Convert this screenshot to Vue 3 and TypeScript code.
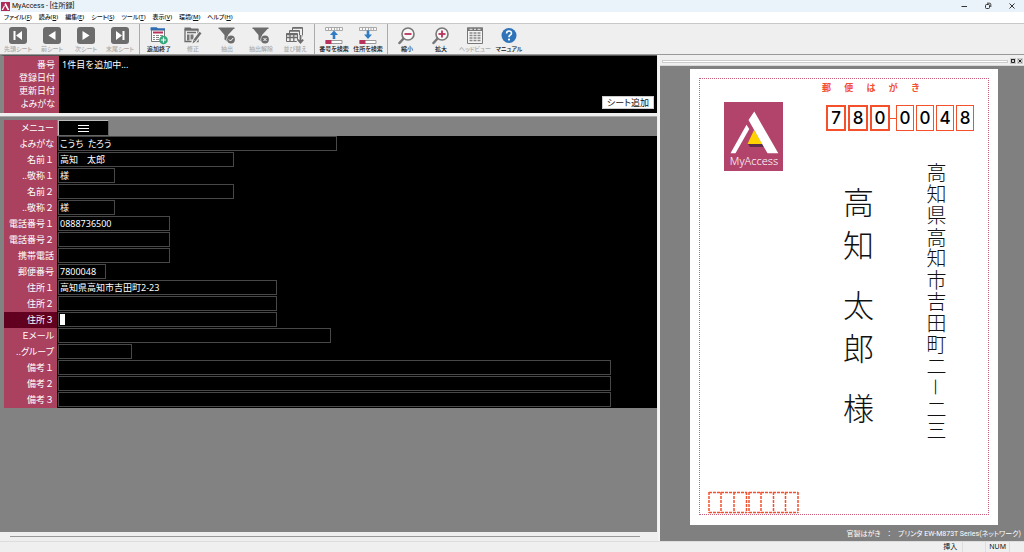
<script setup lang="ts">
import { ref } from 'vue'

interface MenuItem { text: string; key: string }
interface Tool { label: string; icon: string; enabled?: boolean }
interface Field { id: string; label: string; size: string; value: string; kana?: boolean; active?: boolean }

const menus: MenuItem[] = [
  { text: 'ファイル', key: 'F' },
  { text: '読み', key: 'R' },
  { text: '編集', key: 'E' },
  { text: 'シート', key: 'S' },
  { text: 'ツール', key: 'T' },
  { text: '表示', key: 'V' },
  { text: '環境', key: 'M' },
  { text: 'ヘルプ', key: 'H' },
]

const toolGroups: Tool[][] = [
  [
    { label: '先頭シート', icon: 'first' },
    { label: '前シート', icon: 'prev' },
    { label: '次シート', icon: 'next' },
    { label: '末尾シート', icon: 'last' },
  ],
  [
    { label: '追加終了', icon: 'add', enabled: true },
    { label: '修正', icon: 'edit' },
    { label: '抽出', icon: 'filter' },
    { label: '抽出解除', icon: 'unfilter' },
    { label: '並び替え', icon: 'sort' },
  ],
  [
    { label: '番号を検索', icon: 'findup', enabled: true },
    { label: '住所を検索', icon: 'finddown', enabled: true },
  ],
  [
    { label: '縮小', icon: 'zoomout', enabled: true },
    { label: '拡大', icon: 'zoomin', enabled: true },
    { label: 'ヘッドビュー', icon: 'head' },
    { label: 'マニュアル', icon: 'help', enabled: true },
  ],
]

const fields = ref<Field[]>([
  { id: 'yomi', label: 'よみがな', size: 'w-yomi', value: 'こうち  たろう', kana: true },
  { id: 'name1', label: '名前１', size: 'w-name', value: '高知　太郎' },
  { id: 'title1', label: '..敬称１', size: 'w-title', value: '様' },
  { id: 'name2', label: '名前２', size: 'w-name', value: '' },
  { id: 'title2', label: '..敬称２', size: 'w-title', value: '様' },
  { id: 'tel1', label: '電話番号１', size: 'w-tel', value: '0888736500' },
  { id: 'tel2', label: '電話番号２', size: 'w-tel', value: '' },
  { id: 'mobile', label: '携帯電話', size: 'w-tel', value: '' },
  { id: 'zip', label: '郵便番号', size: 'w-zip', value: '7800048' },
  { id: 'addr1', label: '住所１', size: 'w-addr', value: '高知県高知市吉田町2-23' },
  { id: 'addr2', label: '住所２', size: 'w-addr', value: '' },
  { id: 'addr3', label: '住所３', size: 'w-addr', value: '', active: true },
  { id: 'mail', label: 'Ｅメール', size: 'w-mail', value: '', kana: true },
  { id: 'group', label: '..グループ', size: 'w-group', value: '', kana: true },
  { id: 'note1', label: '備考１', size: 'w-note', value: '' },
  { id: 'note2', label: '備考２', size: 'w-note', value: '' },
  { id: 'note3', label: '備考３', size: 'w-note', value: '' },
])

const cardTitle = Array.from('郵便はがき')
const cardAddress = Array.from('高知県高知市吉田町二－二三')
</script>

<template>
  <div class="window">
    <header class="titlebar">
      <svg class="appicon" viewBox="0 0 59 59" aria-hidden="true">
        <rect width="59" height="59" fill="#b02a55" />
        <path d="M30 5 L23 16 L43 53 H55Z M21 21 L25 28 L14 53 H4Z" fill="#fff" />
      </svg>
      <h1>MyAccess - [住所録]</h1>
      <div class="winbtns">
        <button type="button" aria-label="最小化">
          <svg viewBox="0 0 8 8"><path d="M1.5 4.5H7" /></svg>
        </button>
        <button type="button" aria-label="元に戻す">
          <svg viewBox="0 0 8 8"><rect x="1.5" y="2.5" width="4" height="4" rx="1" /><path d="M3 1.2H5.6Q6.8 1.2 6.8 2.4V5" /></svg>
        </button>
        <button type="button" aria-label="閉じる">
          <svg viewBox="0 0 8 8"><path d="M1.5 1.5L6.5 6.5M6.5 1.5L1.5 6.5" /></svg>
        </button>
      </div>
    </header>

    <nav class="menubar">
      <button v-for="m in menus" :key="m.key" type="button">{{ m.text }}(<u>{{ m.key }}</u>)</button>
    </nav>

    <div class="toolbar">
      <div v-for="(group, g) in toolGroups" :key="g" class="toolgroup">
        <button v-for="t in group" :key="t.label" type="button" class="tool" :class="{ off: !t.enabled }">
          <svg v-if="['first', 'prev', 'next', 'last'].includes(t.icon)" viewBox="0 0 20 19">
            <rect x="1" y="1" width="18" height="17" rx="3" fill="#6c6c6c" />
            <path v-if="t.icon === 'first'" d="M5.500 5h2v9h-2z M14 5v9l-6-4.500z" fill="#fff" />
            <path v-if="t.icon === 'prev'" d="M13.500 5v9l-7-4.500z" fill="#fff" />
            <path v-if="t.icon === 'next'" d="M6.500 5v9l7-4.500z" fill="#fff" />
            <path v-if="t.icon === 'last'" d="M12.500 5h2v9h-2z M6 5v9l6-4.500z" fill="#fff" />
          </svg>
          <svg v-else-if="t.icon === 'add'" viewBox="0 0 20 19">
            <path d="M2 4V1.500h6l1 1h7V4z" fill="#2f6cb3" />
            <path d="M2.500 4h13v11.500h-13z" fill="#fff" stroke="#777" />
            <path d="M1.500 1.500h6l1 1h7.500v1.800h-14.500z" fill="#2f6cb3" />
            <path d="M4 6.500h10" stroke="#b8315a" stroke-width="2" />
            <path d="M4 9.500h2m1 0h3m1 0h3M4 11.500h2m1 0h3M4 13.500h2m1 0h3" stroke="#888" stroke-width="1.200" />
            <circle cx="14.500" cy="14" r="4.300" fill="#35a87b" />
            <path d="M14.500 11.500v5M12 14h5" stroke="#fff" stroke-width="1.200" />
          </svg>
          <svg v-else-if="t.icon === 'edit'" viewBox="0 0 20 19">
            <path d="M1.500 4V1.500h6l1 1h7V4z" fill="#6c6c6c" />
            <path d="M2 4h13v11.500H2z" fill="#eee" stroke="#6c6c6c" stroke-width="1.300" />
            <path d="M4 6.500h9" stroke="#6c6c6c" stroke-width="1.500" />
            <path d="M4 8.500h2.500v6H4zM7.500 8.500h3v5h-3z" fill="#777" />
            <path d="M18 6.500L11 15.500L10 18" stroke="#efefef" stroke-width="4.500" fill="none" />
            <path d="M17.500 6.500L11.500 14.500" stroke="#6c6c6c" stroke-width="2.500" />
            <path d="M10.500 14l2 1.500l-3 2z" fill="#6c6c6c" />
          </svg>
          <svg v-else-if="t.icon === 'filter' || t.icon === 'unfilter'" viewBox="0 0 20 19">
            <path d="M2 2.500h15L11 9v7l-3.500-2.500V9z" fill="#6c6c6c" />
            <path d="M1.500 1.500h16v1.500h-16z" fill="#6c6c6c" />
            <circle cx="14" cy="13.500" r="4.600" fill="#efefef" />
            <circle cx="14" cy="13.500" r="3.900" fill="#6c6c6c" />
            <path v-if="t.icon === 'filter'" d="M12 13.500l1.500 1.500l2.700-3" stroke="#fff" fill="none" />
            <path v-else d="M12.500 12l3 3m0-3l-3 3" stroke="#fff" />
          </svg>
          <svg v-else-if="t.icon === 'sort'" viewBox="0 0 20 19">
            <path d="M7.500 4.500v-3h10v9" fill="none" stroke="#6c6c6c" />
            <path d="M4.500 7V4.500h10v7" fill="none" stroke="#6c6c6c" />
            <path d="M1.500 7.500h11v8h-11z" fill="#eee" stroke="#6c6c6c" />
            <path d="M1.500 8.500h11M8 2h9M5 5h9M1.500 11.500h11M5 8v7.500M8.800 8v7.500" stroke="#6c6c6c" stroke-width="1.300" />
            <path d="M15.500 9v7M12.800 13.700l2.700 3l2.700-3" fill="none" stroke="#efefef" stroke-width="4" />
            <path d="M15.500 9v7M12.800 13.700l2.700 3l2.700-3" fill="none" stroke="#6c6c6c" stroke-width="1.800" />
          </svg>
          <svg v-else-if="t.icon === 'findup' || t.icon === 'finddown'" viewBox="0 0 20 19">
            <path d="M1.500 1.500h17v3h-17zM4.500 1.500v3M7.500 1.500v3M10.500 1.500v3M13 1.500v3M15.500 1.500v3" fill="#f8f8f8" stroke="#aaa" />
            <path d="M2 14.500h16v3H2z" fill="#fff" stroke="#999" />
            <path d="M1.500 14h6v4h-6z" fill="#b8315a" />
            <path v-if="t.icon === 'findup'" d="M10 4.500l4 4.500h-2.700v4h-2.600V9H6z" fill="#2f7bc4" />
            <path v-else d="M8.700 4.500h2.600v4H14l-4 4.500l-4-4.500h2.700z" fill="#2f7bc4" />
          </svg>
          <svg v-else-if="t.icon === 'zoomout' || t.icon === 'zoomin'" viewBox="0 0 20 19">
            <path d="M7 12L2.500 17" stroke="#777" stroke-width="2.500" stroke-linecap="round" />
            <circle cx="11" cy="8" r="6" fill="#f8f8f8" stroke="#777" stroke-width="1.600" />
            <path d="M7.500 8h7" stroke="#b8315a" stroke-width="1.800" />
            <path v-if="t.icon === 'zoomin'" d="M11 4.500v7" stroke="#b8315a" stroke-width="1.800" />
          </svg>
          <svg v-else-if="t.icon === 'head'" viewBox="0 0 20 19">
            <path d="M2.500 2h15v15.500h-15z" fill="#f4f4f4" stroke="#777" />
            <path d="M2 1.500h16v3.500H2z" fill="#777" />
            <path d="M4.500 3.300h3m1.500 0h2m1.500 0h3" stroke="#eee" />
            <path d="M4.500 7h3m1 0h3m1 0h3M4.500 9.500h3m1 0h3m1 0h3M4.500 12h3m1 0h3m1 0h3M4.500 14.500h3m1 0h3m1 0h3" stroke="#888" stroke-width="1.500" />
          </svg>
          <svg v-else viewBox="0 0 20 19">
            <circle cx="10" cy="9.500" r="7.500" fill="#2f74b8" />
            <path d="M7.600 7.500Q7.600 5 10 5T12.500 7.200Q12.500 8.500 11 9.300Q10 9.900 10 11.300" fill="none" stroke="#fff" stroke-width="1.600" />
            <circle cx="10" cy="13.600" r="1.100" fill="#fff" />
          </svg>
          <span>{{ t.label }}</span>
        </button>
      </div>
    </div>

    <main class="work">
      <section class="left">
        <div class="summary">
          <dl>
            <dt>番号</dt><dd>1件目を追加中...</dd>
            <dt>登録日付</dt><dd></dd>
            <dt>更新日付</dt><dd></dd>
            <dt class="kana">よみがな</dt><dd></dd>
          </dl>
          <button type="button" class="addsheet kana">シート追加</button>
        </div>

        <div class="sheet">
          <div class="row menurow">
            <span class="label kana">メニュー</span>
            <button type="button" class="burger" aria-label="メニュー"><i></i><i></i><i></i></button>
          </div>
          <div v-for="f in fields" :key="f.id" class="row" :class="{ active: f.active }">
            <label class="label" :class="{ kana: f.kana }" :for="f.id">{{ f.label }}</label>
            <div class="cell">
              <input :id="f.id" v-model="f.value" type="text" :class="[f.size, { kana: f.kana }]" />
              <span v-if="f.active" class="caret"></span>
            </div>
          </div>
        </div>
        <div class="hscroll"><span></span></div>
      </section>

      <section class="preview">
        <div class="dock">
          <span class="grip"></span>
          <button type="button" aria-label="フロート"><svg viewBox="0 0 6 6"><path d="M1.500 1.500h3v3h-3zM1 1.500h4" /></svg></button>
          <button type="button" aria-label="閉じる"><svg viewBox="0 0 6 6"><path d="M1.500 1.500l3 3m0-3l-3 3" /></svg></button>
        </div>
        <div class="stage">
          <article class="card">
            <div class="margin"></div>
            <div class="cardtitle"><span v-for="c in cardTitle" :key="c">{{ c }}</span></div>
            <svg class="logo" viewBox="0 0 59 69" role="img" aria-label="MyAccess">
              <rect width="59" height="69" fill="#b2446c" />
              <path d="M24 42H40V45H26Z" fill="#5b2c4c" />
              <path d="M30 28L38.500 42H23.500Z" fill="#ffd200" />
              <path d="M30.300 9.500L24.500 18L43.500 51.300H54.300ZM22.500 22.700L25.300 27L11.500 51.300H6.500Z" fill="#fff" />
              <text x="30" y="63" text-anchor="middle" class="logotext">MyAccess</text>
            </svg>
            <div class="zip">
              <b>7</b><b>8</b><b>0</b><i></i><span>0</span><span>0</span><span>4</span><span>8</span>
            </div>
            <div class="person"><span>高知</span><span>太郎</span><span>様</span></div>
            <div class="address"><span v-for="(c, i) in cardAddress" :key="i">{{ c }}</span></div>
            <svg class="sender" viewBox="0 0 91 23" aria-hidden="true">
              <path d="M1 1.500H39M1 21.500H39M41 1.500H90M41 21.500H90" />
              <path d="M1 1V22M38.500 1V22M41 1V22M90 1V22" />
              <path d="M13 1V22M26 1V22M53 1V22M65.500 1V22M77.500 1V22" />
            </svg>
          </article>
        </div>
        <p class="printer kana">官製はがき　：　プリンタ EW-M873T Series(ネットワーク)</p>
      </section>
    </main>

    <footer class="status"><span>挿入</span><span></span><span>NUM</span></footer>
  </div>
</template>

<style>
body {
  margin: 0;
}
</style>

<style scoped>
.window {
  display: flex;
  flex-direction: column;
  height: 100vh;
  overflow: hidden;
  background: #efefef;
  color: #111;
  font-family: "Noto Sans", "Noto Sans CJK JP", sans-serif;
  font-size: 9px;
}
.window *,
.window {
  box-sizing: border-box;
}
button {
  margin: 0;
  padding: 0;
  border: 0;
  background: none;
  color: inherit;
  font: inherit;
}
.kana {
  font-feature-settings: "palt";
}
.titlebar {
  display: flex;
  align-items: center;
  flex: none;
  height: 12px;
  padding-left: 1px;
  background: #eaf3fa;
}
.appicon {
  width: 9px;
  height: 9px;
}
h1 {
  flex: 1;
  margin: 0 0 0 2px;
  font-family: Roboto, "Noto Sans CJK JP", sans-serif;
  font-size: 7px;
  font-weight: 400;
  line-height: 12px;
}
.winbtns {
  display: flex;
}
.winbtns button {
  display: grid;
  place-items: center;
  width: 24px;
  height: 12px;
}
.winbtns svg {
  width: 8px;
  height: 8px;
  fill: none;
  stroke: #333;
}
.menubar {
  display: flex;
  flex: none;
  gap: 7px;
  height: 12px;
  padding-left: 4px;
  border-bottom: 1px solid #c8c8c8;
  background: #fff;
  font-size: 6px;
  font-weight: 500;
  line-height: 11px;
  font-feature-settings: "palt";
}
.toolbar {
  display: flex;
  flex: none;
  height: 31px;
  padding-left: 1px;
  border-bottom: 1px solid #999;
}
.toolgroup {
  display: flex;
}
.toolgroup + .toolgroup {
  margin-left: 2px;
  padding-left: 2px;
  border-left: 1px solid #aaa;
}
.tool {
  display: flex;
  flex-direction: column;
  align-items: center;
  width: 34px;
  padding-top: 2px;
  font-size: 6px;
  font-weight: 500;
  line-height: 9px;
  white-space: nowrap;
  font-feature-settings: "palt";
}
.tool svg {
  flex: none;
  width: 20px;
  height: 19px;
  fill: none;
}
.off {
  color: #aaa;
}
.work {
  display: flex;
  flex: 1;
  min-height: 0;
}
.left {
  display: flex;
  flex: 1;
  flex-direction: column;
  min-width: 0;
}
.summary {
  display: flex;
  align-items: flex-end;
  justify-content: space-between;
  flex: none;
  height: 58px;
  margin-right: 1px;
  padding-right: 3px;
  border-top: 1px solid #555;
  border-left: 4px solid #858585;
  background: linear-gradient(to right, #a9415f 55px, #000 55px);
}
dl {
  display: grid;
  grid-template-columns: 55px auto;
  grid-auto-rows: 13px;
  align-self: flex-start;
  margin: 2px 0 0;
  color: #fff;
  line-height: 13px;
}
dt {
  padding-right: 4px;
  text-align: right;
}
dd {
  margin: 0 0 0 3px;
}
.addsheet {
  width: 52px;
  height: 13px;
  margin-bottom: 4px;
  border: 1px solid #ccc;
  background: #fff;
  color: #111;
  line-height: 11px;
}
.sheet {
  flex: 1;
  min-height: 0;
  margin: 3px 1px 0 0;
  padding: 3px 0 0 4px;
  border-top: 1px solid #aaa;
  background: #828282;
}
.row {
  display: flex;
  height: 16px;
  background: #000;
}
.menurow {
  background: none;
}
.label {
  flex: none;
  width: 53px;
  padding-right: 3px;
  background: #a9415f;
  color: #fff;
  line-height: 16px;
  text-align: right;
  white-space: nowrap;
}
.active .label {
  background: #62001f;
}
.burger {
  display: flex;
  flex-direction: column;
  align-items: center;
  justify-content: center;
  gap: 2px;
  width: 51px;
  height: 16px;
  margin-left: 1px;
  border: 1px solid #666;
  border-top-color: #bbb;
  border-left-color: #bbb;
  background: #000;
}
.burger i {
  width: 11px;
  height: 1px;
  background: #fff;
}
.cell {
  position: relative;
  flex: 1;
  min-width: 0;
  padding-left: 1px;
}
input {
  display: block;
  max-width: 100%;
  height: 15px;
  padding: 0 1px;
  border: 1px solid #484848;
  border-radius: 0;
  outline: 0;
  background: #000;
  color: #fff;
  font-family: inherit;
  font-size: 9px;
}
.w-yomi { width: 279px; }
.w-name { width: 176px; }
.w-title { width: 57px; }
.w-tel { width: 112px; }
.w-zip { width: 48px; }
.w-addr { width: 219px; }
.w-mail { width: 273px; }
.w-group { width: 74px; }
.w-note { width: 553px; }
.caret {
  position: absolute;
  top: 2px;
  left: 3px;
  width: 5px;
  height: 11px;
  background: #fff;
}
.hscroll {
  flex: none;
  height: 9px;
  padding: 4px 18px 0 10px;
}
.hscroll span {
  display: block;
  height: 1px;
  background: #999;
}
.preview {
  display: flex;
  flex: none;
  flex-direction: column;
  width: 366px;
  border-left: 2px solid #f4f4f4;
  background: #808080;
}
.dock {
  display: flex;
  align-items: center;
  flex: none;
  gap: 1px;
  height: 11px;
  padding: 2px 1px 0 2px;
  border-bottom: 1px solid #d8d8d8;
  background: #efefef;
}
.grip {
  flex: 1;
  height: 3px;
  margin-right: 1px;
  border: 1px solid #ccc;
  background: #fff;
}
.dock button {
  display: grid;
  width: 6px;
  height: 6px;
  background: #ccc;
}
.dock svg {
  width: 6px;
  height: 6px;
  fill: none;
  stroke: #222;
}
.stage {
  display: flex;
  flex: 1;
  justify-content: center;
  min-height: 0;
  padding: 3px 0 0 4px;
}
.card {
  position: relative;
  width: 308px;
  height: 456px;
  background: #fff;
  color: #111;
}
.margin {
  position: absolute;
  inset: 9px 9px 10px;
  border: 1px dotted #c8607c;
}
.cardtitle {
  position: absolute;
  top: 12px;
  left: 132px;
  display: flex;
  justify-content: space-between;
  width: 98px;
  color: #f4502c;
  font-family: "Noto Sans CJK JP", serif;
  font-size: 9px;
  font-weight: 700;
  line-height: 13px;
}
.logo {
  position: absolute;
  top: 33px;
  left: 34px;
  width: 59px;
  height: 69px;
}
.logotext {
  fill: #fff;
  font-family: "Noto Sans", sans-serif;
  font-size: 11px;
  font-weight: 300;
}
.zip {
  position: absolute;
  top: 36px;
  left: 136px;
  display: flex;
  align-items: center;
  color: #000;
  font-family: Inter, sans-serif;
  font-size: 17px;
  font-weight: 500;
}
.zip b,
.zip span {
  width: 18px;
  height: 26px;
  border: 1px solid #f4502c;
  font-weight: 500;
  line-height: 25px;
  text-align: center;
}
.zip b {
  width: 20px;
  border-width: 2px;
  line-height: 23px;
}
.zip b + b,
.zip span + span {
  margin-left: 2px;
}
.zip i {
  width: 6px;
  height: 1px;
  background: #f4502c;
}
.person {
  position: absolute;
  top: 110px;
  left: 153px;
  display: flex;
  flex-direction: column;
  gap: 17px;
  width: 31px;
  font-family: "Noto Sans CJK JP", serif;
  font-size: 31px;
  font-weight: 300;
  line-height: 43px;
  word-break: break-all;
}
.address {
  position: absolute;
  top: 93px;
  left: 236px;
  display: flex;
  flex-direction: column;
  justify-content: space-between;
  height: 278px;
  font-family: "Noto Sans CJK JP", serif;
  font-size: 20px;
  font-weight: 300;
  line-height: 20px;
}
.address span {
  height: 20px;
  writing-mode: vertical-rl;
}
.sender {
  position: absolute;
  top: 422px;
  left: 18px;
  width: 91px;
  height: 23px;
  fill: none;
  stroke: #f4502c;
  stroke-dasharray: 3 1;
  stroke-width: 1.5;
}
.printer {
  flex: none;
  margin: 0;
  padding-right: 3px;
  color: #fff;
  font-family: Roboto, "Noto Sans CJK JP", sans-serif;
  font-size: 7px;
  line-height: 13px;
  text-align: right;
}
.status {
  display: flex;
  flex: none;
  justify-content: flex-end;
  height: 11px;
  padding-right: 14px;
  border-top: 1px solid #ddd;
  font-size: 7px;
  line-height: 10px;
}
.status span {
  min-width: 23px;
  padding: 0 3px;
  border-right: 1px solid #ddd;
}
</style>
